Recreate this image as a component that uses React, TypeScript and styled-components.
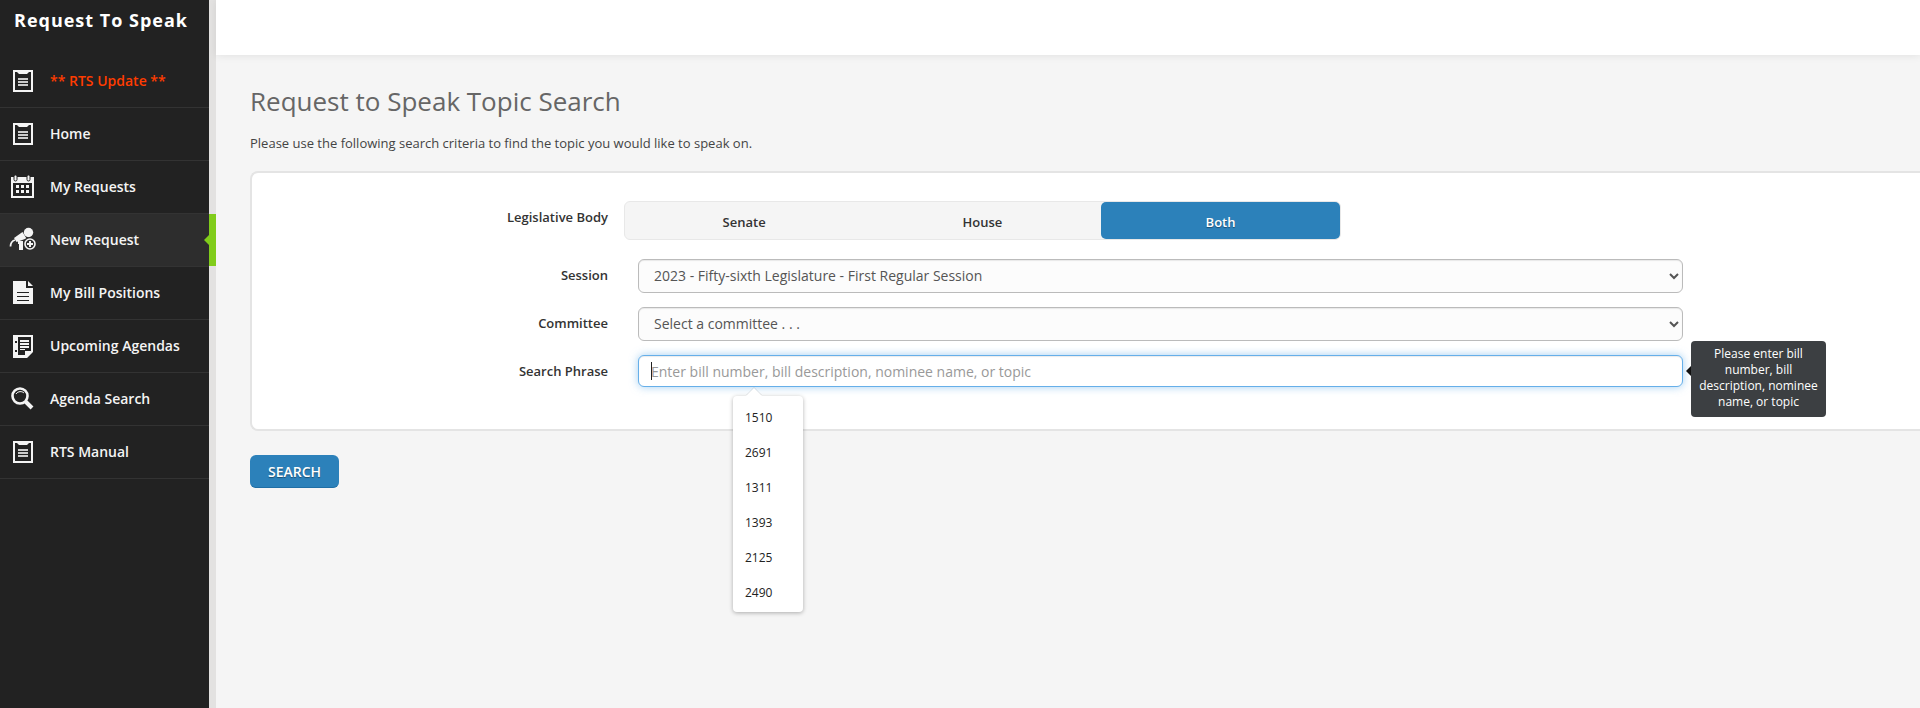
import React from "react";
import styled, { createGlobalStyle, css } from "styled-components";

const GlobalStyle = createGlobalStyle`
  *, *::before, *::after { box-sizing: border-box; }
  body {
    margin: 0;
    background: #f5f5f5;
    color: #333;
    font-family: "Open Sans", "Noto Sans", sans-serif;
    font-size: 13px;
    line-height: 20px;
    overflow-x: hidden;
  }
  button, input, select { font-family: inherit; }
`;

const Page = styled.div`
  display: flex;
  min-height: 100vh;
`;

const Sidebar = styled.aside`
  flex: none;
  width: 216px;
  background: #222;
  border-right: 7px solid #e3e2e1;
`;

const Brand = styled.div`
  height: 55px;
  padding: 7px 0 0 14px;
  color: #fff;
  font-size: 18px;
  font-weight: 700;
  line-height: 26px;
  letter-spacing: 1px;
  white-space: nowrap;
`;

const NavList = styled.ul`
  margin: 0;
  padding: 0;
  list-style: none;
`;

const NavLink = styled.a<{ $active?: boolean; $alert?: boolean }>`
  position: relative;
  display: flex;
  align-items: center;
  height: 53px;
  padding-left: 8px;
  gap: 12px;
  border-bottom: 1px solid #333;
  color: ${(p) => (p.$alert ? "#ff3c00" : "#f4f4f4")};
  font-size: 14px;
  font-weight: 600;
  text-decoration: none;
  white-space: nowrap;
  ${(p) =>
    p.$active &&
    css`
      background: #2d2d2d;
      &::before {
        content: "";
        position: absolute;
        top: 0;
        bottom: 0;
        right: -7px;
        width: 7px;
        background: #80cc1a;
      }
      &::after {
        content: "";
        position: absolute;
        top: 21px;
        right: 0;
        border: 5px solid transparent;
        border-left: 0;
        border-right-color: #80cc1a;
      }
    `}
`;

const NavIcon = styled.svg`
  flex: none;
  width: 30px;
  height: 28px;
  color: #f4f4f4;
`;

const Main = styled.main`
  flex: 1;
  min-width: 0;
`;

const TopBar = styled.header`
  height: 55px;
  background: #fff;
  box-shadow: 0 1px 8px rgba(0, 0, 0, 0.08);
`;

const Content = styled.form`
  padding: 30px 0 0 34px;
`;

const Title = styled.h1`
  margin: 0;
  color: #666;
  font-size: 26px;
  font-weight: 400;
  line-height: 32px;
`;

const Intro = styled.p`
  margin: 16px 0 18px;
  color: #444;
`;

const Panel = styled.section`
  display: flex;
  flex-direction: column;
  gap: 14px;
  padding: 28px 0 40px;
  background: #fff;
  border: 2px solid #e4e4e4;
  border-right: 0;
  border-radius: 8px 0 0 8px;
`;

const FormRow = styled.div`
  display: grid;
  grid-template-columns: 356fr 1075fr 237fr;
  min-height: 34px;
`;

const labelText = css`
  padding-top: 6px;
  color: #333;
  font-weight: 600;
  text-align: right;
`;

const Label = styled.label`
  ${labelText}
`;

const GroupLabel = styled.div`
  ${labelText}
`;

const Field = styled.div`
  position: relative;
  margin-left: 30px;
`;

const Segments = styled.div`
  display: grid;
  grid-template-columns: repeat(3, 1fr);
  width: calc(100% * 2 / 3);
  height: 39px;
  margin: 0 0 5px 16px;
  background: #f5f5f5;
  border: 1px solid #e8e8e8;
  border-radius: 6px;
`;

const Segment = styled.label`
  display: flex;
  align-items: center;
  justify-content: center;
  padding-top: 2px;
  border-radius: 5px;
  color: #333;
  font-weight: 600;
  &:has(input:checked) {
    background: #2c81ba;
    color: #fff;
    text-shadow: 0 1px 1px rgba(0, 0, 0, 0.4);
  }
`;

const HiddenRadio = styled.input`
  position: absolute;
  opacity: 0;
  pointer-events: none;
`;

const Select = styled.select`
  display: block;
  width: 100%;
  height: 34px;
  padding: 0 4px 2px 11px;
  background: #fcfcfc;
  border: 1px solid #bbb;
  border-radius: 6px;
  box-shadow: inset 0 1px 1px rgba(0, 0, 0, 0.08);
  color: #555;
  font-size: 14px;
`;

const TextInput = styled.input`
  display: block;
  width: 100%;
  height: 32px;
  padding: 0 12px;
  background: #fff;
  border: 1px solid #66afe9;
  border-radius: 6px;
  box-shadow: inset 0 1px 1px rgba(0, 0, 0, 0.08), 0 0 8px rgba(102, 175, 233, 0.6);
  color: #555;
  font-size: 14px;
  outline: none;
  &::placeholder { color: #999; opacity: 1; }
`;

const Caret = styled.span`
  position: absolute;
  top: 7px;
  left: 13px;
  width: 1px;
  height: 18px;
  background: #222;
`;

const Tooltip = styled.div`
  position: absolute;
  top: -14px;
  left: 100%;
  width: 135px;
  margin-left: 8px;
  padding: 5px 8px 7px;
  background: #3c3f42;
  border-radius: 4px;
  color: #fff;
  font-size: 12px;
  line-height: 16px;
  text-align: center;
  &::before {
    content: "";
    position: absolute;
    top: 25px;
    right: 100%;
    border: 5px solid transparent;
    border-left: 0;
    border-right-color: #111;
  }
`;

const Suggestions = styled.ul`
  position: absolute;
  z-index: 2;
  top: 41px;
  left: 95px;
  width: 70px;
  margin: 0;
  padding: 4px 0 2px;
  list-style: none;
  background: #fff;
  border-radius: 4px;
  box-shadow: 0 1px 4px rgba(0, 0, 0, 0.3);
  &::before {
    content: "";
    position: absolute;
    left: 13px;
    bottom: 100%;
    border: 8px solid transparent;
    border-top: 0;
    border-bottom-color: #fff;
    filter: drop-shadow(0 -1px 0 rgba(0, 0, 0, 0.1));
  }
`;

const Suggestion = styled.li`
  height: 35px;
  padding-left: 12px;
  color: #222;
  font-size: 12px;
  line-height: 35px;
`;

const SearchButton = styled.button`
  height: 33px;
  margin-top: 24px;
  padding: 0 18px;
  background: #2c81ba;
  border: 0;
  border-bottom: 1px solid #1f6ea5;
  border-radius: 6px;
  color: #fff;
  font-size: 14px;
  font-weight: 600;
  text-shadow: 0 1px 1px rgba(0, 0, 0, 0.4);
`;

const ClipboardIcon = () => (
  <NavIcon viewBox="0 0 30 28" aria-hidden="true">
    <path fill="currentColor" fillRule="evenodd" d="M5 3h20v22H5zM7 5v18h16V5h-2l-2 2h-8l-2-2z" />
    <path fill="#ccc" d="M10 11h10v2H10zM10 14h10v2H10zM10 17h10v2H10z" />
  </NavIcon>
);

const CalendarIcon = () => (
  <NavIcon viewBox="0 0 30 28" aria-hidden="true">
    <path fill="currentColor" fillRule="evenodd" d="M3 4h23v21H3zM5 10v13h19V10z" />
    <path fill="currentColor" d="M8 12h3v3H8zM13 12h3v3h-3zM18 12h3v3h-3zM8 17h3v3H8zM13 17h3v3h-3zM18 17h3v3h-3z" />
    <rect x="6" y="2" width="3" height="6" rx="1.500" fill="currentColor" stroke="#222" />
    <rect x="19" y="2" width="3" height="6" rx="1.500" fill="currentColor" stroke="#222" />
  </NavIcon>
);

const MicrophoneIcon = () => (
  <NavIcon viewBox="0 0 30 28" aria-hidden="true">
    <circle cx="20.500" cy="6.500" r="4.700" fill="currentColor" />
    <path fill="currentColor" d="M14.500 6l4 6.500-10 3.500-2.500-4z" />
    <path fill="none" stroke="currentColor" strokeWidth="1.800" d="M7 14c-3 1-4.500 3-4.500 6.500" />
    <path fill="currentColor" d="M10 15h5v9h-4v-6h-1z" />
    <circle cx="22" cy="18" r="7" fill="#2d2d2d" />
    <circle cx="22" cy="18" r="5" fill="none" stroke="currentColor" strokeWidth="1.600" />
    <path stroke="currentColor" strokeWidth="2" d="M22 15v6M19 18h6" />
  </NavIcon>
);

const DocumentIcon = () => (
  <NavIcon viewBox="0 0 30 28" aria-hidden="true">
    <path fill="currentColor" d="M5 2h13v7h7v16H5z" />
    <path fill="currentColor" d="M20 2l5 5h-5z" />
    <path fill="#222" d="M9 13h12v1H9zM9 17h12v1H9zM9 21h12v1H9z" />
  </NavIcon>
);

const AgendaIcon = () => (
  <NavIcon viewBox="0 0 30 28" aria-hidden="true">
    <path fill="currentColor" fillRule="evenodd" d="M5 3h20v17l-6 6H5zM10 5v18h7v-4h6V5z" />
    <path fill="currentColor" d="M12 8h9v2h-9zM12 11h9v2h-9zM12 14h9v2h-9zM12 17h5v1h-5z" />
    <path fill="#222" d="M7 9h2v2H7zM7 18h2v2H7z" />
  </NavIcon>
);

const MagnifierIcon = () => (
  <NavIcon viewBox="0 0 30 28" aria-hidden="true">
    <circle cx="12" cy="11" r="7.500" fill="none" stroke="currentColor" strokeWidth="2.600" />
    <path fill="none" stroke="currentColor" d="M8 9c2-3 6-3 8-1" />
    <path stroke="currentColor" strokeWidth="4" d="M17 16l7 7" />
  </NavIcon>
);

const navItems = [
  { label: "** RTS Update **", Icon: ClipboardIcon, alert: true },
  { label: "Home", Icon: ClipboardIcon },
  { label: "My Requests", Icon: CalendarIcon },
  { label: "New Request", Icon: MicrophoneIcon, active: true },
  { label: "My Bill Positions", Icon: DocumentIcon },
  { label: "Upcoming Agendas", Icon: AgendaIcon },
  { label: "Agenda Search", Icon: MagnifierIcon },
  { label: "RTS Manual", Icon: ClipboardIcon },
];

const bodies = ["Senate", "House", "Both"];
const suggestions = ["1510", "2691", "1311", "1393", "2125", "2490"];

export default function App() {
  return (
    <>
      <GlobalStyle />
      <Page>
        <Sidebar>
          <Brand>Request To Speak</Brand>
          <nav>
            <NavList>
              {navItems.map(({ label, Icon, active, alert }) => (
                <li key={label}>
                  <NavLink href="#" $active={active} $alert={alert}>
                    <Icon />
                    {label}
                  </NavLink>
                </li>
              ))}
            </NavList>
          </nav>
        </Sidebar>
        <Main>
          <TopBar />
          <Content onSubmit={(e) => e.preventDefault()}>
            <Title>Request to Speak Topic Search</Title>
            <Intro>Please use the following search criteria to find the topic you would like to speak on.</Intro>
            <Panel>
              <FormRow role="radiogroup" aria-labelledby="body-label">
                <GroupLabel id="body-label">Legislative Body</GroupLabel>
                <Segments>
                  {bodies.map((name) => (
                    <Segment key={name}>
                      <HiddenRadio type="radio" name="body" value={name} defaultChecked={name === "Both"} />
                      {name}
                    </Segment>
                  ))}
                </Segments>
              </FormRow>
              <FormRow>
                <Label htmlFor="session">Session</Label>
                <Field>
                  <Select id="session">
                    <option>2023 - Fifty-sixth Legislature - First Regular Session</option>
                  </Select>
                </Field>
              </FormRow>
              <FormRow>
                <Label htmlFor="committee">Committee</Label>
                <Field>
                  <Select id="committee">
                    <option>Select a committee . . .</option>
                  </Select>
                </Field>
              </FormRow>
              <FormRow>
                <Label htmlFor="phrase">Search Phrase</Label>
                <Field>
                  <TextInput
                    id="phrase"
                    type="text"
                    autoComplete="off"
                    aria-describedby="phrase-tip"
                    placeholder="Enter bill number, bill description, nominee name, or topic"
                  />
                  <Caret />
                  <Tooltip id="phrase-tip" role="tooltip">
                    Please enter bill number, bill description, nominee name, or topic
                  </Tooltip>
                  <Suggestions>
                    {suggestions.map((bill) => (
                      <Suggestion key={bill}>{bill}</Suggestion>
                    ))}
                  </Suggestions>
                </Field>
              </FormRow>
            </Panel>
            <SearchButton type="submit">SEARCH</SearchButton>
          </Content>
        </Main>
      </Page>
    </>
  );
}
